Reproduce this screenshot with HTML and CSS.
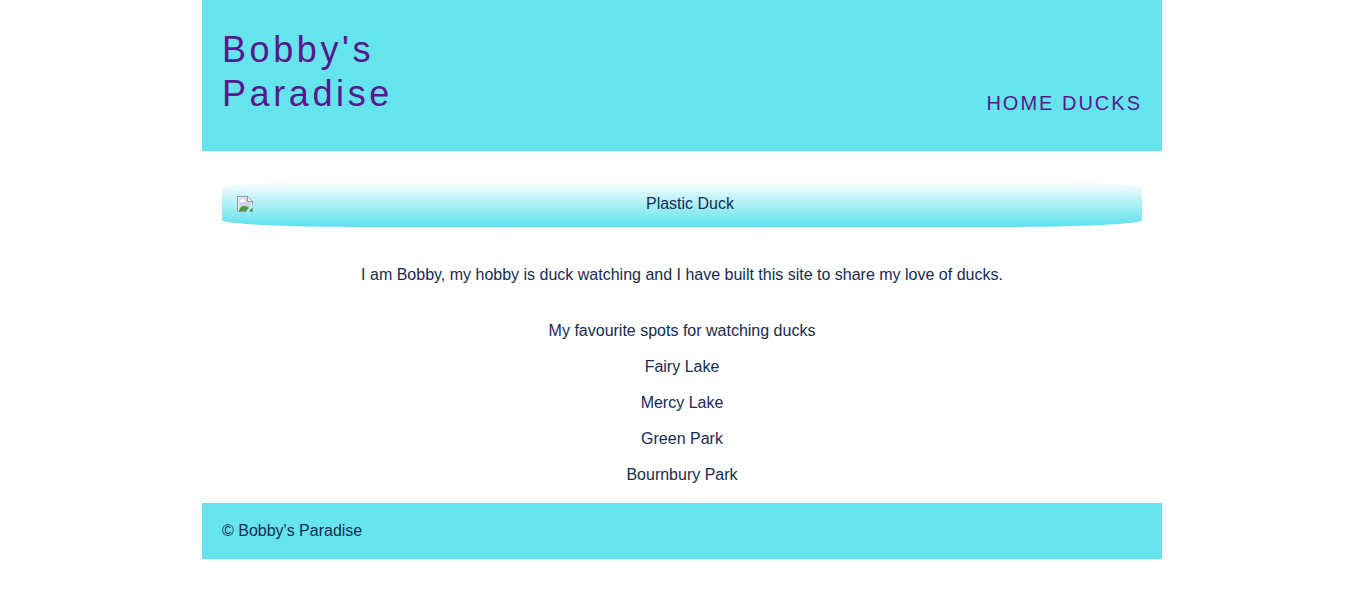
FILE: index.html
```html
<!DOCTYPE html>
<html lang="en">
<head>
<meta charset="utf-8">
<meta name="viewport" content="width=device-width, initial-scale=1">
<title>Bobby's Paradise</title>
<link rel="stylesheet" href="styles.css">
</head>
<body>
<div class="container">
  <header class="header">
    <h1 class="site-title"><a href="#">Bobby's<br>Paradise</a></h1>
    <nav class="nav">
      <a href="#">Home</a> <a href="#ducks">Ducks</a>
    </nav>
  </header>
  <main class="main">
    <div class="banner">
      <svg class="banner-icon" viewBox="0 0 16 16" aria-hidden="true">
        <path fill="#eef3fa" d="M0 0h11l5 5v4l-6 7H0z"/>
        <path fill="#c9d8f2" d="M2 2h8v4h4v4l-4 5H2z"/>
        <path fill="#fff" d="M3 6V4h1V3h3v1h1v2zM11 1l4 4h-4z"/>
        <path fill="#4b9f35" d="M2 15v-1l2-3 2-1h3l2 1 1 1-3 3z"/>
        <path fill="#4b9f35" d="M12 15l3-3v3z"/>
        <path fill="none" stroke="#929599" d="M10 15.500H.5V.5h10.500l4.500 4.500v4M10.500.5v5h5M13 15.500h2.500V12"/>
      </svg>
      <span class="banner-text">Plastic Duck</span>
    </div>
    <p class="intro">I am Bobby, my hobby is duck watching and I have built this site to share my love of ducks.</p>
    <section class="spots" id="ducks">
      <h2 class="spots-title">My favourite spots for watching ducks</h2>
      <ul class="spots-list">
        <li>Fairy Lake</li>
        <li>Mercy Lake</li>
        <li>Green Park</li>
        <li>Bournbury Park</li>
      </ul>
    </section>
  </main>
  <footer class="footer">© Bobby's Paradise</footer>
</div>
</body>
</html>
```
FILE: styles.css
```css
* {
  box-sizing: border-box;
}

body {
  margin: 0;
  background: #fff;
  color: #162b50;
  font: 16px/20px "Liberation Sans", Arial, sans-serif;
}

.container {
  max-width: 960px;
  margin: 0 auto;
}

.header {
  display: flex;
  justify-content: space-between;
  align-items: flex-end;
  padding: 28px 20px 35px;
  background: #66e4ee;
}

.header a {
  color: #551a8b;
  text-decoration: none;
}

.site-title {
  margin: 0;
  font-size: 36px;
  font-weight: 400;
  line-height: 44px;
  letter-spacing: 0.1em;
}

.nav {
  font-size: 20px;
  line-height: 26px;
  letter-spacing: 0.1em;
  text-transform: uppercase;
}

.main {
  padding: 30px 20px 18px;
  text-align: center;
}

.banner {
  display: flex;
  align-items: center;
  padding: 13px 15px;
  border-radius: 15%;
  background: linear-gradient(#fff, #5ce1ec);
}

.banner-icon {
  width: 16px;
  height: 16px;
}

.banner-text {
  flex: 1;
}

.intro {
  margin: 38px 0 36px;
}

.spots-title {
  margin: 0;
  font-size: 16px;
  font-weight: 400;
}

.spots-list {
  display: grid;
  gap: 16px;
  margin: 16px 0 0;
  padding: 0;
  list-style: none;
}

.footer {
  padding: 18px 20px;
  background: #66e4ee;
}
```
